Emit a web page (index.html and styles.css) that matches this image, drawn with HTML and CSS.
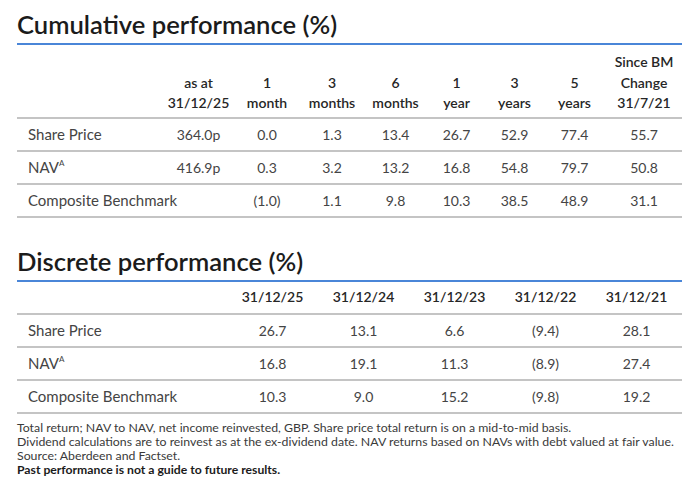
FILE: index.html
```html
<!DOCTYPE html>
<html>
<head>
<meta charset="utf-8">
<link rel="stylesheet" href="styles.css">
</head>
<body>
<div class="page">
  <h2 class="title">Cumulative performance (%)</h2>
  <table class="perf cum">
    <colgroup>
      <col class="c-label"><col class="c-asat"><col class="c-1m"><col class="c-3m"><col class="c-6m"><col class="c-1y"><col class="c-3y"><col class="c-5y"><col class="c-since">
    </colgroup>
    <thead>
      <tr>
        <th></th>
        <th>as at<br>31/12/25</th>
        <th>1<br>month</th>
        <th>3<br>months</th>
        <th>6<br>months</th>
        <th>1<br>year</th>
        <th>3<br>years</th>
        <th>5<br>years</th>
        <th>Since BM<br>Change<br>31/7/21</th>
      </tr>
    </thead>
    <tbody>
      <tr><td class="lbl">Share Price</td><td>364.0p</td><td>0.0</td><td>1.3</td><td>13.4</td><td>26.7</td><td>52.9</td><td>77.4</td><td>55.7</td></tr>
      <tr><td class="lbl">NAV<sup>A</sup></td><td>416.9p</td><td>0.3</td><td>3.2</td><td>13.2</td><td>16.8</td><td>54.8</td><td>79.7</td><td>50.8</td></tr>
      <tr><td class="lbl" colspan="2">Composite Benchmark</td><td>(1.0)</td><td>1.1</td><td>9.8</td><td>10.3</td><td>38.5</td><td>48.9</td><td>31.1</td></tr>
    </tbody>
  </table>

  <h2 class="title title2">Discrete performance (%)</h2>
  <table class="perf disc">
    <colgroup>
      <col class="d-label"><col class="d-col"><col class="d-col"><col class="d-col"><col class="d-col"><col class="d-col">
    </colgroup>
    <thead>
      <tr><th></th><th>31/12/25</th><th>31/12/24</th><th>31/12/23</th><th>31/12/22</th><th>31/12/21</th></tr>
    </thead>
    <tbody>
      <tr><td class="lbl">Share Price</td><td>26.7</td><td>13.1</td><td>6.6</td><td>(9.4)</td><td>28.1</td></tr>
      <tr><td class="lbl">NAV<sup>A</sup></td><td>16.8</td><td>19.1</td><td>11.3</td><td>(8.9)</td><td>27.4</td></tr>
      <tr><td class="lbl">Composite Benchmark</td><td>10.3</td><td>9.0</td><td>15.2</td><td>(9.8)</td><td>19.2</td></tr>
    </tbody>
  </table>

  <div class="notes">
    <p>Total return; NAV to NAV, net income reinvested, GBP. Share price total return is on a mid-to-mid basis.</p>
    <p>Dividend calculations are to reinvest as at the ex-dividend date. NAV returns based on NAVs with debt valued at fair value.</p>
    <p>Source: Aberdeen and Factset.</p>
    <p class="bold">Past performance is not a guide to future results.</p>
  </div>
</div>
</body>
</html>
```

FILE: styles.css
```css
html, body {
  margin: 0;
  padding: 0;
  background: #ffffff;
}
body {
  font-family: "Lato", "Liberation Sans", sans-serif;
  color: #3a3a3a;
}
.page {
  width: 665px;
  padding: 8px 0 0 17px;
}
.title {
  margin: 0;
  font-size: 25.6px;
  font-weight: 600;
  color: #1b1b1b;
  line-height: 32px;
  padding-bottom: 3px;
  border-bottom: 2px solid #4a86d8;
}
.title2 {
  margin-top: 27px;
}
.perf {
  width: 665px;
  border-collapse: collapse;
  table-layout: fixed;
  font-size: 14px;
}
.perf th {
  font-weight: 600;
  color: #262626;
  text-align: center;
  vertical-align: bottom;
  line-height: 20.5px;
  padding: 0 0 3px 0;
  border-bottom: 2px solid #c4c4c4;
}
.perf td {
  text-align: center;
  height: 31px;
  padding: 0;
  border-bottom: 2px solid #c4c4c4;
  color: #444444;
}
.perf td.lbl {
  text-align: left;
  padding-left: 11px;
  font-size: 15px;
}
.cum thead th {
  padding-top: 7px;
}
.disc thead th {
  height: 31px;
  padding-bottom: 0;
  vertical-align: middle;
  font-size: 14px;
}
sup {
  font-size: 8px;
  vertical-align: top;
  line-height: 10px;
}
.c-label { width: 146px; }
.c-asat { width: 71px; }
.c-1m { width: 66px; }
.c-3m { width: 64px; }
.c-6m { width: 63px; }
.c-1y { width: 59px; }
.c-3y { width: 57px; }
.c-5y { width: 63px; }
.c-since { width: 76px; }
.d-label { width: 210px; }
.d-col { width: 91px; }
.notes {
  padding-top: 7px;
  font-size: 12.3px;
  line-height: 14px;
  color: #3a3a3a;
  white-space: nowrap;
}
.notes p {
  margin: 0;
}
.notes .bold {
  font-weight: 700;
  font-size: 12.2px;
  color: #1b1b1b;
}
```
